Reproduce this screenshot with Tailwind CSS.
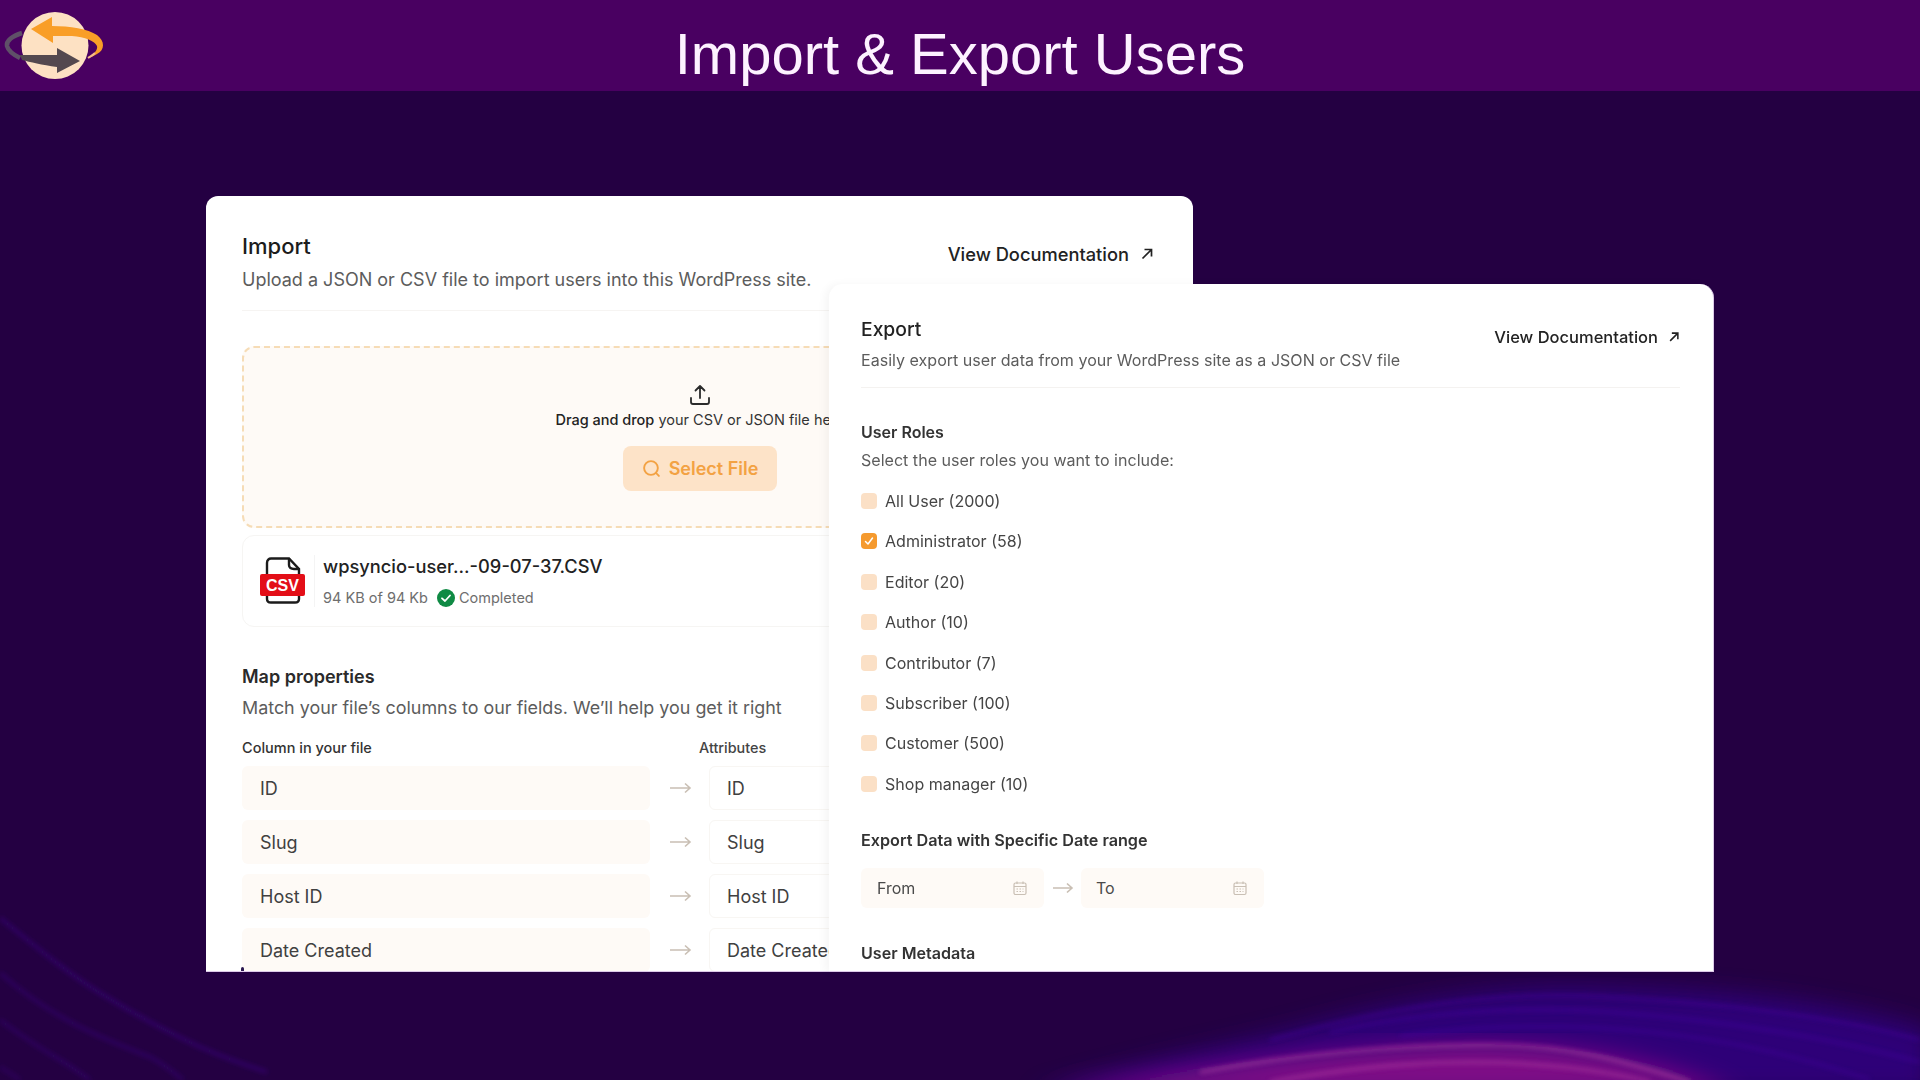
<!DOCTYPE html>
<html lang="en">
<head>
<meta charset="utf-8">
<title>Import & Export Users</title>
<script src="https://cdn.jsdelivr.net/npm/@tailwindcss/browser@4"></script>
</head>
<body class="bg-[#240042]">
<div class="relative w-[1920px] h-[1080px] overflow-hidden bg-[#240042] font-['Inter',sans-serif]">

  <!-- background waves -->
  <svg class="absolute inset-0 w-full h-full" viewBox="0 0 1920 1080" fill="none">
    <defs>
      <filter id="soft" x="-20%" y="-20%" width="140%" height="140%"><feGaussianBlur stdDeviation="12"/></filter>
      <filter id="thin" x="-20%" y="-20%" width="140%" height="140%"><feGaussianBlur stdDeviation="2.400"/></filter>
    </defs>
    <path d="M1030 1095 C1130 1065 1210 1050 1293 1030 C1400 1000 1500 985 1587 987 C1720 990 1830 1000 1930 1030 L1930 1095 Z" fill="#30008a" opacity="0.75" filter="url(#soft)"/>
    <path d="M1050 1095 C1160 1072 1300 1050 1470 1044 C1560 1044 1650 1055 1740 1095 Z" fill="#7f0a86" filter="url(#soft)"/>
    <g filter="url(#thin)" stroke-width="2.600">
      <path d="M1200 1072 C1320 1050 1420 1044 1500 1045 C1570 1046 1620 1060 1690 1082" stroke="#c04aa8" opacity="0.7"/>
      <path d="M1270 1082 C1360 1066 1430 1060 1510 1063 C1570 1066 1610 1072 1650 1082" stroke="#c04aa8" opacity="0.6"/>
      <path d="M1270 1040 C1400 1004 1500 992 1590 996 C1720 1002 1840 1018 1920 1040" stroke="#4a14aa" opacity="0.55"/>
      <path d="M1330 1032 C1430 1010 1520 1006 1610 1012 C1720 1020 1830 1038 1920 1062" stroke="#4a14aa" opacity="0.5"/>
      <path d="M1400 1036 C1490 1024 1570 1024 1650 1032 C1730 1040 1800 1056 1870 1080" stroke="#4a14aa" opacity="0.45"/>
    </g>
    <g filter="url(#thin)" stroke="#3a1286" stroke-width="2.800">
      <path d="M0 918 C40 950 70 975 100 993 C140 1018 170 1033 200 1047 C225 1058 245 1065 267 1072" opacity="0.7"/>
      <path d="M0 973 C25 995 45 1008 67 1020 C95 1036 125 1047 150 1057 C162 1063 172 1071 183 1080" opacity="0.55"/>
      <path d="M0 1020 C20 1035 40 1048 60 1060 C72 1067 80 1073 90 1080" opacity="0.55"/>
      <path d="M0 1067 C7 1071 13 1075 20 1080" opacity="0.45"/>
    </g>
  </svg>

  <!-- header -->
  <header class="relative h-[91px] bg-[#490061] flex items-center justify-center">
    <svg class="absolute left-0 top-0" width="110" height="91" viewBox="0 0 110 91" fill="none">
      <circle cx="55" cy="45.500" r="33.500" fill="#fde1c3"/>
      <path d="M22 33 C12 36 6 41 7 46 C8 50 12 54 20 58" stroke="#5f5068" stroke-width="4.500" fill="none"/>
      <path d="M20 55 C30 55 45 55 57 55 L57 48 L80 61 L57 73 L57 67 C42 65 30 62 22 60 Z" fill="#54494f"/>
      <path d="M31 29 L52 17 L52 26 C70 26 88 29 97 35 C105 41 105 50 97 54 C94 56 91 57 88 58 C94 54 98 50 97 46 C95 41 85 37 72 36 L53 36 L53 43 Z" fill="#f99e27"/>
      <path d="M88 58 C91 56 93 55 95 53" stroke="#f5b98a" stroke-width="2"/>
    </svg>
    <h1 class="font-['Liberation_Sans',sans-serif] text-[58px] leading-none text-[#fdf2ff] font-normal mt-[16px]">Import &amp; Export Users</h1>
  </header>

  <!-- import panel -->
  <section class="relative ml-[206px] mt-[105px] w-[987px] h-[776px] overflow-hidden bg-white rounded-t-[12px] border-b border-[#dcc9e8] pl-[36px] pr-[35px] pt-[36px]">
    <div class="flex justify-between items-start border-b border-[#f6f4f2] pb-[16px]">
      <div class="flex flex-col gap-[6px]">
        <h2 class="text-[22px] leading-[28px] font-medium text-[#1c1c1c]">Import</h2>
        <p class="text-[18px] leading-[28px] text-[#5c5c5c]">Upload a JSON or CSV file to import users into this WordPress site.</p>
      </div>
      <a class="mt-[8px] mr-[4px] flex items-center gap-[11px] text-[18.3px] leading-[28px] font-medium text-[#222]">View Documentation
        <svg width="14" height="14" viewBox="0 0 14 14" fill="none" stroke="#222" stroke-width="1.700"><path d="M2.500 11.500 L11.500 2.500 M4.500 2.500 H11.500 V9.500"/></svg>
      </a>
    </div>

    <div class="mt-[35px] h-[182px] rounded-[12px] border-2 border-dashed border-[#f6dcb6] bg-[#fefaf6] flex flex-col items-center pt-[35px]">
      <svg width="24" height="24" viewBox="0 0 24 24" fill="none" stroke="#2b2b2b" stroke-width="1.800" stroke-linecap="round" stroke-linejoin="round"><path d="M12 15 V3 M7.500 7.500 L12 3 L16.500 7.500 M3 15 V19 C3 20.200 3.800 21 5 21 H19 C20.200 21 21 20.200 21 19 V15"/></svg>
      <p class="mt-[3px] text-[14.5px] leading-[20px] text-[#333]"><span class="font-medium text-[#222]">Drag and drop</span> your CSV or JSON file here</p>
      <button class="mt-[16px] h-[45px] w-[154px] rounded-[8px] bg-[#fde3c8] flex items-center justify-center gap-[8px] text-[18px] font-semibold text-[#f3a243]">
        <svg width="19" height="19" viewBox="0 0 18 18" fill="none" stroke="#f3a243" stroke-width="1.800" stroke-linecap="round"><circle cx="8.500" cy="8.500" r="6.500"/><path d="M13.200 13.200 L16 16"/></svg>
        Select File
      </button>
    </div>

    <div class="mt-[7px] h-[92px] rounded-[12px] border border-[#f6f5f3] flex items-center pl-[15px]">
      <svg width="48" height="48" viewBox="0 0 48 48" fill="none" class="shrink-0">
        <path d="M9 22 V6 C9 3 11 1.500 13 1.500 H31 L41 12 V22 M9 39 V42 C9 44.500 11 45.500 13 45.500 H37 C39 45.500 41 44.500 41 42 V39" stroke="#1b1b1b" stroke-width="2.400"/>
        <path d="M31 1.500 V8 C31 11 33 12 36 12 H41" stroke="#1b1b1b" stroke-width="2.400"/>
        <rect x="2" y="17" width="45" height="22" rx="2" fill="#e30e17"/>
        <text x="24.500" y="34" text-anchor="middle" font-family="Liberation Sans, sans-serif" font-size="16" font-weight="700" fill="#ffffff">CSV</text>
      </svg>
      <div class="ml-[8px] h-[52px] w-px bg-[#f4f4f4]"></div>
      <div class="ml-[8px] flex flex-col gap-[10px]">
        <p class="text-[18.3px] leading-[24px] font-medium text-[#222]">wpsyncio-user...-09-07-37.CSV</p>
        <div class="flex items-center text-[14.5px] leading-[20px] text-[#6e6e6e]">
          <span>94 KB of 94 Kb</span>
          <svg class="ml-[9px] mr-[4px]" width="18" height="18" viewBox="0 0 18 18" fill="none"><circle cx="9" cy="9" r="9" fill="#0f8a44"/><path d="M5 9.300 L8 12 L13 6.500" stroke="#fff" stroke-width="1.800" stroke-linecap="round" stroke-linejoin="round"/></svg>
          <span>Completed</span>
        </div>
      </div>
    </div>

    <h3 class="mt-[36px] text-[18px] leading-[28px] font-semibold text-[#2a2a2a]">Map properties</h3>
    <p class="mt-[3px] text-[17.9px] leading-[28px] text-[#5c5c5c]">Match your file’s columns to our fields. We’ll help you get it right</p>

    <div class="mt-[15px] grid grid-cols-[408px_59px_1fr] items-center gap-y-[10px]">
      <div class="text-[14.5px] leading-[20px] font-medium text-[#333] -mb-px translate-y-px">Column in your file</div>
      <div></div>
      <div class="text-[14.4px] leading-[20px] font-medium text-[#444] -ml-[10px] -mb-px translate-y-px">Attributes</div>

      <div class="h-[44px] rounded-[6px] bg-[#fefaf6] flex items-center pl-[18px] text-[18px] text-[#404040]">ID</div>
      <svg width="59" height="12" viewBox="0 0 59 12" fill="none" stroke="#c9bfb4" stroke-width="1.600"><path d="M20 6 H40 M35 1.500 L40 6 L35 10.500"/></svg>
      <div class="h-[44px] rounded-[6px] border border-[#f8f6f3] flex items-center pl-[17px] text-[18px] text-[#404040]">ID</div>

      <div class="h-[44px] rounded-[6px] bg-[#fefaf6] flex items-center pl-[18px] text-[18px] text-[#404040]">Slug</div>
      <svg width="59" height="12" viewBox="0 0 59 12" fill="none" stroke="#c9bfb4" stroke-width="1.600"><path d="M20 6 H40 M35 1.500 L40 6 L35 10.500"/></svg>
      <div class="h-[44px] rounded-[6px] border border-[#f8f6f3] flex items-center pl-[17px] text-[18px] text-[#404040]">Slug</div>

      <div class="h-[44px] rounded-[6px] bg-[#fefaf6] flex items-center pl-[18px] text-[18px] text-[#404040]">Host ID</div>
      <svg width="59" height="12" viewBox="0 0 59 12" fill="none" stroke="#c9bfb4" stroke-width="1.600"><path d="M20 6 H40 M35 1.500 L40 6 L35 10.500"/></svg>
      <div class="h-[44px] rounded-[6px] border border-[#f8f6f3] flex items-center pl-[17px] text-[18px] text-[#404040]">Host ID</div>

      <div class="h-[44px] rounded-[6px] bg-[#fefaf6] flex items-center pl-[18px] text-[18px] text-[#404040]">Date Created</div>
      <svg width="59" height="12" viewBox="0 0 59 12" fill="none" stroke="#c9bfb4" stroke-width="1.600"><path d="M20 6 H40 M35 1.500 L40 6 L35 10.500"/></svg>
      <div class="h-[44px] rounded-[6px] border border-[#f8f6f3] flex items-center pl-[17px] text-[18px] text-[#404040]">Date Created</div>
    </div>
    <span class="absolute left-[35px] bottom-0 w-[3px] h-[4px] rounded-t-full bg-[#2a1850]"></span>
  </section>

  <!-- export panel, overlapping the import panel -->
  <section class="absolute left-[829px] top-[284px] w-[885px] h-[688px] overflow-hidden bg-white rounded-t-[14px] border-b border-r border-[#dcc9e8] pl-[32px] pr-[33px] pt-[31px] shadow-[-4px_0_8px_rgba(0,0,0,0.04)]">
    <div class="flex justify-between items-start border-b border-[#f4f2f0] pb-[15px]">
      <div class="flex flex-col gap-[5px]">
        <h2 class="text-[19.3px] leading-[28px] font-medium text-[#222]">Export</h2>
        <p class="text-[16.07px] leading-[24px] text-[#5c5c5c]">Easily export user data from your WordPress site as a JSON or CSV file</p>
      </div>
      <a class="mt-[10px] flex items-center gap-[10px] text-[16.5px] leading-[24px] font-medium text-[#222]">View Documentation
        <svg width="12" height="12" viewBox="0 0 14 14" fill="none" stroke="#222" stroke-width="1.800"><path d="M2.500 11.500 L11.500 2.500 M4.500 2.500 H11.500 V9.500"/></svg>
      </a>
    </div>

    <h3 class="mt-[32px] text-[16px] leading-[24px] font-semibold text-[#333]">User Roles</h3>
    <p class="mt-[4px] text-[16.07px] leading-[24px] text-[#5c5c5c]">Select the user roles you want to include:</p>

    <ul class="mt-[17px] flex flex-col gap-[16.4px] text-[16.05px] leading-[24px] text-[#454545]">
      <li class="flex items-center gap-[8px]"><span class="size-[16px] rounded-[4px] bg-[#fbe0c6]"></span>All User (2000)</li>
      <li class="flex items-center gap-[8px]"><span class="size-[16px] rounded-[4px] bg-[#f59a2e] flex items-center justify-center"><svg width="10" height="10" viewBox="0 0 10 10" fill="none" stroke="#fff" stroke-width="1.500" stroke-linecap="round" stroke-linejoin="round"><path d="M1.500 5.500 L4 8 L8.500 2"/></svg></span>Administrator (58)</li>
      <li class="flex items-center gap-[8px]"><span class="size-[16px] rounded-[4px] bg-[#fbe0c6]"></span>Editor (20)</li>
      <li class="flex items-center gap-[8px]"><span class="size-[16px] rounded-[4px] bg-[#fbe0c6]"></span>Author (10)</li>
      <li class="flex items-center gap-[8px]"><span class="size-[16px] rounded-[4px] bg-[#fbe0c6]"></span>Contributor (7)</li>
      <li class="flex items-center gap-[8px]"><span class="size-[16px] rounded-[4px] bg-[#fbe0c6]"></span>Subscriber (100)</li>
      <li class="flex items-center gap-[8px]"><span class="size-[16px] rounded-[4px] bg-[#fbe0c6]"></span>Customer (500)</li>
      <li class="flex items-center gap-[8px]"><span class="size-[16px] rounded-[4px] bg-[#fbe0c6]"></span>Shop manager (10)</li>
    </ul>

    <h3 class="mt-[32px] text-[16.2px] leading-[24px] font-semibold text-[#333]">Export Data with Specific Date range</h3>
    <div class="mt-[16px] flex items-center">
      <div class="h-[40px] w-[183px] rounded-[6px] bg-[#fefaf6] flex items-center justify-between pl-[16px] pr-[16px] text-[16px] text-[#4a4a4a]">From
        <svg width="16" height="16" viewBox="0 0 16 16" fill="none" stroke="#c9bfb4" stroke-width="1.200"><rect x="2" y="3" width="12" height="11.500" rx="1.500"/><path d="M2 6.500 H14 M5 1.500 V4 M11 1.500 V4"/><path d="M4.500 9 H11.500 M4.500 11.500 H11.500" stroke-dasharray="1.500 1.500"/></svg>
      </div>
      <svg width="37" height="12" viewBox="0 0 37 12" fill="none" stroke="#c9bfb4" stroke-width="1.600"><path d="M9 6 H28 M23 1.500 L28 6 L23 10.500"/></svg>
      <div class="h-[40px] w-[183px] rounded-[6px] bg-[#fefaf6] flex items-center justify-between pl-[15px] pr-[16px] text-[16px] text-[#4a4a4a]">To
        <svg width="16" height="16" viewBox="0 0 16 16" fill="none" stroke="#c9bfb4" stroke-width="1.200"><rect x="2" y="3" width="12" height="11.500" rx="1.500"/><path d="M2 6.500 H14 M5 1.500 V4 M11 1.500 V4"/><path d="M4.500 9 H11.500 M4.500 11.500 H11.500" stroke-dasharray="1.500 1.500"/></svg>
      </div>
    </div>
    <h3 class="mt-[33px] text-[16.1px] leading-[24px] font-semibold text-[#333]">User Metadata</h3>
  </section>
</div>
</body>
</html>
